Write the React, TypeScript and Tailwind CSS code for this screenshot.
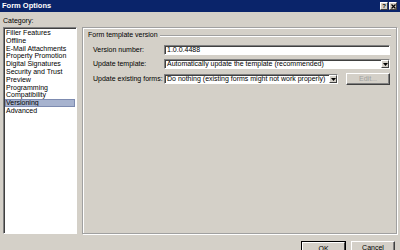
import React from "react";

const items = [
  "Filler Features",
  "Offline",
  "E-Mail Attachments",
  "Property Promotion",
  "Digital Signatures",
  "Security and Trust",
  "Preview",
  "Programming",
  "Compatibility",
  "Versioning",
  "Advanced",
];

function Arrow() {
  return (
    <div className="w-[8px] h-[8px] shrink-0 bg-[#d4d0c8] border border-t-white border-l-white border-b-[#404040] border-r-[#404040] flex items-center justify-center">
      <svg width="5" height="3" viewBox="0 0 5 3">
        <path d="M0 0h5L2.5 3z" fill="#000" />
      </svg>
    </div>
  );
}

export default function App() {
  return (
    <div
      className="w-[400px] h-[250px] bg-[#d4d0c8] overflow-hidden flex flex-col text-[7px] leading-[8px] text-black"
      style={{ fontFamily: '"Liberation Sans", Arial, sans-serif' }}
    >
      <div className="h-[12px] shrink-0 bg-[#0a246a] flex items-center pl-[2px] pr-[3px]">
        <span className="text-white font-bold text-[7.5px]">Form Options</span>
        <div className="ml-auto flex gap-[1px]">
          <div className="w-[8px] h-[8px] bg-[#d4d0c8] border border-t-white border-l-white border-b-[#404040] border-r-[#404040] flex items-center justify-center text-[6px] font-bold leading-none">?</div>
          <div className="w-[8px] h-[8px] bg-[#d4d0c8] border border-t-white border-l-white border-b-[#404040] border-r-[#404040] flex items-center justify-center">
            <svg width="5" height="5" viewBox="0 0 5 5">
              <path d="M0.5 0.5L4.5 4.5M4.5 0.5L0.5 4.5" stroke="#000" strokeWidth="1.2" />
            </svg>
          </div>
        </div>
      </div>
      <div className="flex shrink-0 pl-[3px] pt-[4px] h-[222px]">
        <div className="w-[74px] flex flex-col">
          <div className="h-[11px] pt-[1px]">Category:</div>
          <div className="flex-1 bg-white border border-t-[#808080] border-l-[#808080] border-b-white border-r-white shadow-[inset_1px_1px_0_#404040] pt-[1px] pl-[1px] pr-[1px]">
            {items.map((it) => (
              <div
                key={it}
                className={
                  "h-[7.8px] leading-[7.8px] pl-[1px] whitespace-nowrap " +
                  (it === "Versioning" ? "bg-[#a7b3cf] outline outline-1 outline-[#7d8bb0] -outline-offset-1" : "")
                }
              >
                {it}
              </div>
            ))}
          </div>
        </div>
        <div className="ml-[5px] mt-[11px] w-[315px] border border-[#a0a0a0] shadow-[inset_1px_1px_0_#fff,1px_1px_0_#fff] px-[5px] pt-[3px]">
          <div className="flex items-center gap-[2px]">
            <span>Form template version</span>
            <div className="flex-1 h-[2px] border-t border-[#a0a0a0] border-b border-b-white mt-[1px]" />
          </div>
          <div className="mt-[6px] pl-[5px] flex flex-col gap-[4px]">
            <div className="flex items-center h-[10px]">
              <span className="w-[71px]">Version number:</span>
              <div className="w-[226px] h-[10px] bg-white border border-t-[#808080] border-l-[#808080] border-b-white border-r-white shadow-[inset_1px_1px_0_#404040] pl-[2px] leading-[8px]">
                1.0.0.4488
              </div>
            </div>
            <div className="flex items-center h-[10px]">
              <span className="w-[71px]">Update template:</span>
              <div className="w-[226px] h-[10px] bg-white border border-t-[#808080] border-l-[#808080] border-b-white border-r-white shadow-[inset_1px_1px_0_#404040] pl-[2px] flex items-center">
                <span className="flex-1">Automatically update the template (recommended)</span>
                <Arrow />
              </div>
            </div>
            <div className="flex items-center h-[12px]">
              <span className="w-[71px]">Update existing forms:</span>
              <div className="w-[174px] h-[10px] bg-white border border-t-[#808080] border-l-[#808080] border-b-white border-r-white shadow-[inset_1px_1px_0_#404040] pl-[2px] flex items-center">
                <span className="flex-1 whitespace-nowrap">Do nothing (existing forms might not work properly)</span>
                <Arrow />
              </div>
              <div className="ml-[8px] w-[44px] h-[12px] border border-t-white border-l-white border-b-[#404040] border-r-[#404040] shadow-[inset_-1px_-1px_0_#808080] flex items-center justify-center text-[#a0a0a0]">
                Edit...
              </div>
            </div>
          </div>
        </div>
      </div>
      <div className="flex shrink-0 justify-end gap-[5px] pr-[5px] mt-[7px]">
        <div className="w-[45px] h-[14px] shrink-0 border border-black">
          <div className="w-full h-full border border-t-white border-l-white border-b-[#404040] border-r-[#404040] flex items-start justify-center pt-[2px]">OK</div>
        </div>
        <div className="w-[44px] h-[14px] shrink-0 border border-t-white border-l-white border-b-[#404040] border-r-[#404040] shadow-[inset_-1px_-1px_0_#808080] flex items-start justify-center pt-[2px]">
          Cancel
        </div>
      </div>
    </div>
  );
}
